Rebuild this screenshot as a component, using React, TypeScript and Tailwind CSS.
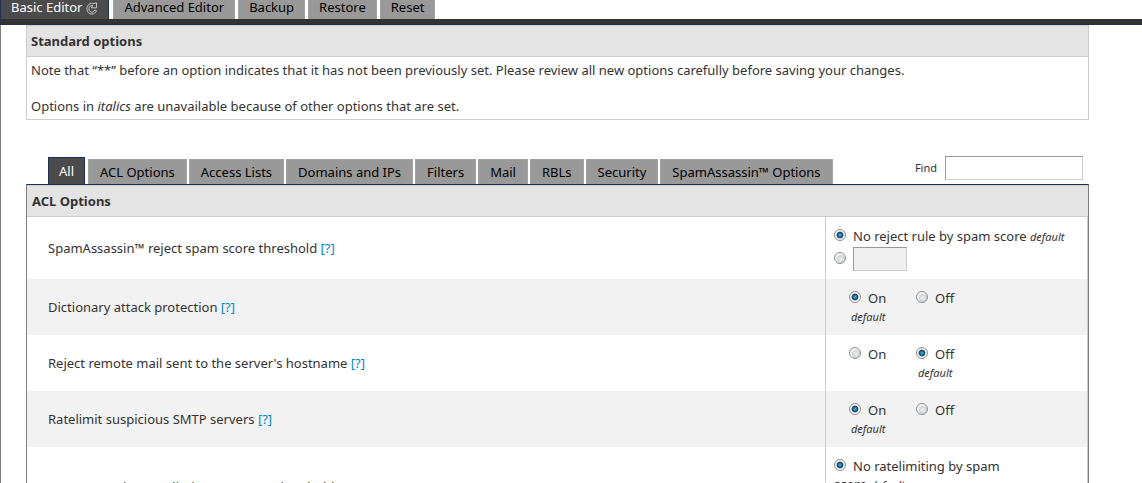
import { useState } from "react";

type Option = {
  id: string;
  label: string;
  kind: "toggle" | "score";
  noneLabel?: string;
  defaultValue: "on" | "off" | "none";
};

const editorTabs = ["Advanced Editor", "Backup", "Restore", "Reset"];

const categories = [
  "ACL Options",
  "Access Lists",
  "Domains and IPs",
  "Filters",
  "Mail",
  "RBLs",
  "Security",
  "SpamAssassin™ Options",
];

const options: Option[] = [
  {
    id: "reject-score",
    label: "SpamAssassin™ reject spam score threshold",
    kind: "score",
    noneLabel: "No reject rule by spam score",
    defaultValue: "none",
  },
  { id: "dictionary", label: "Dictionary attack protection", kind: "toggle", defaultValue: "on" },
  {
    id: "hostname",
    label: "Reject remote mail sent to the server's hostname",
    kind: "toggle",
    defaultValue: "off",
  },
  { id: "ratelimit", label: "Ratelimit suspicious SMTP servers", kind: "toggle", defaultValue: "on" },
  {
    id: "ratelimit-score",
    label: "SpamAssassin™ ratelimit spam score threshold",
    kind: "score",
    noneLabel: "No ratelimiting by spam score",
    defaultValue: "none",
  },
];

export default function App() {
  return (
    <div className="h-screen overflow-hidden bg-white font-['Lucida_Grande','Noto_Sans',sans-serif] text-[13px] leading-[18px] text-[#333]">
      <EditorNav />
      <main className="border-l border-[#808080] pr-[53px] pl-[25px]">
        <StandardOptions />
        <div className="mt-9 flex items-end pl-[22px]">
          <CategoryTabs />
          <div className="mb-1 ml-auto flex items-center gap-2 pr-[6px]">
            <label htmlFor="find" className="text-[11px]">
              Find
            </label>
            <input
              id="find"
              type="text"
              className="h-6 w-[138px] border border-t-[#999] border-r-[#ccc] border-b-[#ccc] border-l-[#999] px-1 outline-none"
            />
          </div>
        </div>
        <OptionsTable />
      </main>
    </div>
  );
}

function EditorNav() {
  return (
    <nav className="flex items-start gap-[3px] border-b border-[#203058] bg-[linear-gradient(#333,#333)] bg-[length:100%_5px] bg-bottom bg-no-repeat pb-[5px] text-black">
      <a
        href="#basic"
        className="mr-px flex h-[19px] items-start gap-1 border-x border-[#203058] bg-[#4b4b4b] px-[10px] leading-[14px] text-white"
      >
        Basic Editor
        <RefreshIcon />
      </a>
      {editorTabs.map((tab) => (
        <a
          key={tab}
          href={`#${tab}`}
          className="h-[19px] border-x border-[#a3a3a3] bg-[#999] px-[10px] leading-[14px]"
        >
          {tab}
        </a>
      ))}
    </nav>
  );
}

function RefreshIcon() {
  return (
    <svg viewBox="0 0 12 13" className="mt-[2px] h-[13px] w-3" fill="none" aria-hidden="true">
      <path
        d="M8 1.6C4.2.4.9 3 .9 6.8c0 3.2 2.2 5.2 4.8 5.2 2.3 0 4.1-1.2 4.7-3.4L8.6 8C8.2 9.4 7.2 10.1 5.8 10.1 4 10.1 2.9 8.7 2.9 6.8c0-2.3 1.7-3.7 3.9-3.3L5.3 5.8h5.2V.8z"
        stroke="#ddd"
        strokeWidth="0.8"
      />
    </svg>
  );
}

function StandardOptions() {
  return (
    <section className="border border-[#ccc]">
      <h2 className="border-b border-[#ccc] bg-[#e4e4e4] px-1 py-[6px] font-bold">
        Standard options
      </h2>
      <div className="p-1">
        <p>
          Note that “**” before an option indicates that it has not been previously set. Please
          review all new options carefully before saving your changes.
        </p>
        <p className="mt-[18px]">
          Options in <em>italics</em> are unavailable because of other options that are set.
        </p>
      </div>
    </section>
  );
}

function CategoryTabs() {
  return (
    <div className="flex items-end gap-[2px] text-black">
      <button
        type="button"
        className="mr-px h-[27px] border border-b-0 border-[#203058] bg-[#4b4b4b] px-[10px] text-white"
      >
        All
      </button>
      {categories.map((category) => (
        <button
          key={category}
          type="button"
          className="h-[25px] border border-b-0 border-[#a3a3a3] bg-[#999] px-[11px] whitespace-nowrap"
        >
          {category}
        </button>
      ))}
    </div>
  );
}

function OptionsTable() {
  return (
    <table className="w-full border-separate border-spacing-0 border border-t-[#203058] border-r-[#808080] border-b-[#808080] border-l-[#808080]">
      <thead>
        <tr>
          <th
            colSpan={2}
            className="h-8 border-y border-[#ccc] bg-[#e4e4e4] px-[5px] text-left font-bold"
          >
            ACL Options
          </th>
        </tr>
      </thead>
      <tbody>
        {options.map((option) => (
          <tr key={option.id} className="even:bg-[#f2f2f2]">
            <td className="pl-[21px]">
              {option.label}{" "}
              <a href={`#help-${option.id}`} className="text-[#0088cc]">
                [?]
              </a>
            </td>
            <td className="w-[263px] border-r border-l border-[#ccc] align-top">
              {option.kind === "toggle" ? (
                <ToggleField option={option} />
              ) : (
                <ScoreField option={option} />
              )}
            </td>
          </tr>
        ))}
      </tbody>
    </table>
  );
}

function DefaultNote() {
  return <em className="text-[11px] leading-none">default</em>;
}

function ToggleField({ option }: { option: Option }) {
  const [value, setValue] = useState(option.defaultValue);

  return (
    <div className="flex h-14 pt-[10px] pl-[23px]">
      {(["on", "off"] as const).map((choice) => (
        <div key={choice} className="w-[67px]">
          <label className="flex items-start gap-[7px]">
            <Radio
              name={option.id}
              checked={value === choice}
              onChange={() => setValue(choice)}
            />
            {choice === "on" ? "On" : "Off"}
          </label>
          {option.defaultValue === choice ? (
            <div className="pl-[2px]">
              <DefaultNote />
            </div>
          ) : null}
        </div>
      ))}
    </div>
  );
}

function ScoreField({ option }: { option: Option }) {
  const [value, setValue] = useState<string>("none");

  return (
    <div className="pt-[10px] pr-[18px] pb-2 pl-2">
      <div>
        <label>
          <span className="mr-[7px] inline-block align-top">
            <Radio
              name={option.id}
              checked={value === "none"}
              onChange={() => setValue("none")}
            />
          </span>
          {option.noneLabel}
        </label>
        {"\u00a0"}
        <DefaultNote />
      </div>
      <div className="flex items-start gap-[7px] pt-[2px]">
        <div className="pt-[3px]">
          <Radio
            name={option.id}
            label="Custom score"
            checked={value === "custom"}
            onChange={() => setValue("custom")}
          />
        </div>
        <input
          type="text"
          aria-label={option.label}
          disabled={value === "none"}
          className="h-6 w-[54px] border border-t-[#999] border-r-[#ccc] border-b-[#ccc] border-l-[#999] px-1 disabled:bg-[#f0f0f0]"
        />
      </div>
    </div>
  );
}

function Radio({
  name,
  label,
  checked,
  onChange,
}: {
  name: string;
  label?: string;
  checked: boolean;
  onChange: () => void;
}) {
  return (
    <input
      type="radio"
      name={name}
      aria-label={label}
      checked={checked}
      onChange={onChange}
      className="mt-[2px] block size-3 shrink-0 appearance-none rounded-full border border-[#8e8f8f] bg-[radial-gradient(circle_at_60%_60%,#f0f0f0_0,#dcdfe2_30%,#d0d3d6_42%,#f4f4f4_54%)] checked:bg-[radial-gradient(circle_at_50%_50%,#5cc4ea_0,#1f8fc4_16%,#123f66_40%,#f4f4f4_54%)]"
    />
  );
}
